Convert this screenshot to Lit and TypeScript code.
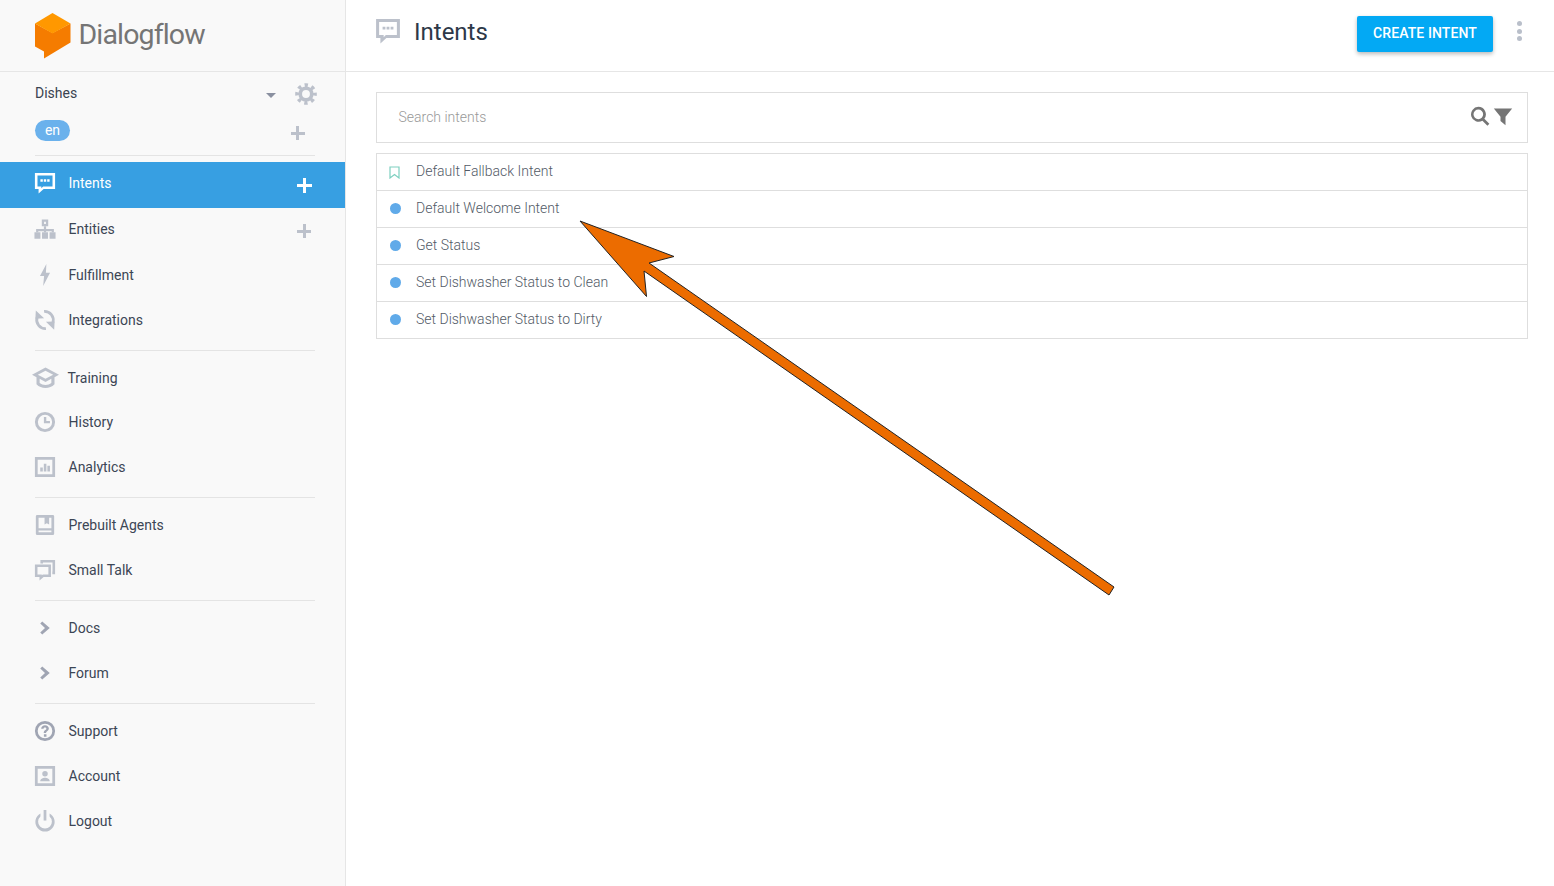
import { LitElement, html, css, svg } from "lit";
import { customElement } from "lit/decorators.js";

const icons: Record<string, unknown> = {
  intents: svg`<path fill-rule="evenodd" d="M1 1h22v17.500H10.500L5 23.500v-5H1zM3.800 3.800v11.900H8v2l2-2h10.200V3.800z"/><path d="M7 8h2.600v2.600H7zM10.700 8h2.600v2.600h-2.600zM14.400 8H17v2.600h-2.600z"/>`,
  entities: svg`<path fill-rule="evenodd" d="M8.500 .5h7v7.500h-7zM11 3v2.500h2V3z"/><path d="M10.800 8h2.400v3h8.500v3.500h-2.400v-1.200H13.200v1.200h-2.400v-1.200H4.700v1.200H2.300V11h8.500z"/><path d="M.5 14.500h6.500V21.500H.5zM8.750 14.500h6.500V21.500h-6.500zM17 14.500h6.500V21.500H17z"/>`,
  bolt: svg`<path d="M13.500 0 6.500 13h4.500L10 24l7.500-14.500H13z"/>`,
  sync: svg`<path fill="none" stroke="#bcc1cb" stroke-width="3" d="M13 21.500A9.500 9.500 0 0 1 3.300 9.500"/><path fill="none" stroke="#bcc1cb" stroke-width="3" d="M11 2.500A9.500 9.500 0 0 1 20.700 14.500"/><path d="M2 1.500 11 10 1.500 10.500zM22 22.500 13 14 22.500 13.500z"/>`,
  training: svg`<path fill-rule="evenodd" d="M12 3 0 9.500 4 11.700V18c2 2.300 5 3.300 8 3.300s6-1 8-3.300v-6.300L24 9.500zM12 6 18.800 9.500 12 13 5.200 9.500zM6.800 13.200 12 16l5.200-2.800v3.700c-1.400 1.100-3.200 1.700-5.200 1.700s-3.800-.6-5.200-1.700z"/>`,
  history: svg`<path fill-rule="evenodd" d="M12 1a11 11 0 1 0 0 22 11 11 0 0 0 0-22zm0 3.200a7.800 7.800 0 1 1 0 15.600 7.800 7.800 0 0 1 0-15.600z"/><path d="M10.800 6.500h2.600v4.300h4v2.600h-6.600z"/>`,
  analytics: svg`<path fill-rule="evenodd" d="M1 1h22v22H1zM4 4v16h16V4z"/><path d="M6.800 12.500h2.800V17H6.800zM10.700 8.500h2.800V17h-2.800zM14.600 10.500h2.800V17h-2.800z"/>`,
  prebuilt: svg`<path fill-rule="evenodd" d="M3.500 1h17a1.500 1.500 0 0 1 1.500 1.500v19a1.500 1.500 0 0 1-1.500 1.500h-17A1.500 1.500 0 0 1 2 21.500v-19A1.500 1.500 0 0 1 3.500 1zm1.500 3v11.500h14V4h-2.500v7.500L14 10l-2.500 1.500V4zM5 18v2h14v-2z"/>`,
  talk: svg`<path fill-rule="evenodd" d="M7 1h16v15.500h-3v-2.800h.2V3.800H9.800V5H7z"/><path fill-rule="evenodd" d="M1 6h17.500v13.500h-8L6 23.500v-4H1zm2.800 2.800v8H8.500v1l1.200-1H15.700v-8z"/>`,
  chevron: svg`<path d="M9 4.800 17.200 12 9 19.200 6.800 17 12 12 6.800 7z"/>`,
  support: svg`<path fill-rule="evenodd" d="M12 1a11 11 0 1 0 0 22 11 11 0 0 0 0-22zm0 3a8 8 0 1 1 0 16 8 8 0 0 1 0-16z"/><path d="M10.800 15.600h2.800v2.600h-2.800zM12 5.800c-2.300 0-4 1.500-4.200 3.700h2.600c.1-.9.700-1.400 1.600-1.400s1.500.6 1.500 1.400c0 .7-.4 1-1.100 1.500-1.200.9-1.800 1.600-1.800 3.300h2.600c0-1 .3-1.300 1.100-1.900 1.100-.8 1.900-1.600 1.900-3 0-2.100-1.800-3.600-4.200-3.600z"/>`,
  account: svg`<path fill-rule="evenodd" d="M1 1h22v22H1zM4 4v16h16V4z"/><path d="M12 6.500a3 3 0 1 1 0 6 3 3 0 0 1 0-6zM6.800 17.800c0-2.500 2.900-3.800 5.200-3.800s5.200 1.300 5.200 3.800z"/>`,
  logout: svg`<path d="M10.500 0h3v11.500h-3z"/><path d="M7 3.800v3.400a7.500 7.500 0 1 0 10 0V3.800a10.500 10.500 0 1 1-10 0z"/>`,
  gear: svg`<circle cx="12" cy="12" r="6.300" fill="none" stroke="#bcc1cb" stroke-width="4"/><circle cx="12" cy="12" r="9.600" fill="none" stroke="#bcc1cb" stroke-width="4.400" stroke-dasharray="3.600 3.940" stroke-dashoffset="1.800"/>`,
};

const icon = (name: string, cls = "") =>
  html`<svg class="ic ${cls}" viewBox="0 0 24 24" aria-hidden="true">${icons[name]}</svg>`;

const plus = (cls = "") => html`<span class="plus ${cls}"></span>`;

type Item = { label: string; icon: string; cls?: string; add?: boolean };

const groups: Item[][] = [
  [
    { label: "Entities", icon: "entities", add: true },
    { label: "Fulfillment", icon: "bolt" },
    { label: "Integrations", icon: "sync" },
  ],
  [
    { label: "Training", icon: "training", cls: "wide" },
    { label: "History", icon: "history" },
    { label: "Analytics", icon: "analytics" },
  ],
  [
    { label: "Prebuilt Agents", icon: "prebuilt" },
    { label: "Small Talk", icon: "talk" },
  ],
  [
    { label: "Docs", icon: "chevron", cls: "dark" },
    { label: "Forum", icon: "chevron", cls: "dark" },
  ],
  [
    { label: "Support", icon: "support", cls: "dark" },
    { label: "Account", icon: "account" },
    { label: "Logout", icon: "logout" },
  ],
];

const rows = [
  "Default Fallback Intent",
  "Default Welcome Intent",
  "Get Status",
  "Set Dishwasher Status to Clean",
  "Set Dishwasher Status to Dirty",
];

@customElement("app-root")
export class AppRoot extends LitElement {
  static styles = css`
    :host {
      display: block;
      position: relative;
      width: 100%;
      height: 886px;
      overflow: hidden;
      background: #fff;
      font-family: Roboto, "Liberation Sans", sans-serif;
      font-size: 14px;
      color: #3a4350;
    }
    .layout { display: flex; height: 100%; }
    .side {
      width: 345px;
      flex: none;
      background: #f9f9f9;
      border-right: 1px solid #e6e6e6;
      display: flex;
      flex-direction: column;
    }
    .logo {
      height: 71px;
      flex: none;
      border-bottom: 1px solid #e6e6e6;
      display: flex;
      align-items: center;
      padding-left: 34px;
      gap: 7.5px;
    }
    .logo svg { width: 37px; height: 46px; flex: none; margin-top: 1px; }
    .logo span {
      font-size: 28.5px;
      color: #757575;
      letter-spacing: -0.85px;
      margin-top: -3px;
    }
    .agent {
      display: grid;
      grid-template-columns: 1fr auto auto;
      grid-template-rows: 21px 21px;
      row-gap: 16px;
      padding: 11px 28px 14px 35px;
      align-items: center;
    }
    .agent-name { grid-row: 1; grid-column: 1; margin-top: -2px; }
    .caret {
      grid-row: 1;
      grid-column: 2;
      width: 0;
      height: 0;
      border: 5px solid transparent;
      border-top: 5px solid #8a90a0;
      border-bottom: 0;
      margin: 4px 19px 0 0;
    }
    .ic { width: 22px; height: 22px; fill: #bcc1cb; flex: none; display: block; }
    .gear { grid-row: 1; grid-column: 3; margin-top: 1px; }
    .pill {
      grid-row: 2;
      grid-column: 1;
      justify-self: start;
      width: 35px;
      height: 21px;
      border-radius: 11px;
      background: #6ab1ec;
      color: #fff;
      text-align: center;
      line-height: 20px;
      font-size: 14px;
    }
    .agent-add { grid-row: 2; grid-column: 2 / 4; justify-self: end; margin: 5px 12.5px 0 0; }
    .plus { display: block; position: relative; width: 14px; height: 14px; flex: none; }
    .plus::before, .plus::after { content: ""; position: absolute; background: #bcc1cb; }
    .plus::before { left: 0; right: 0; top: 5.5px; height: 3px; }
    .plus::after { top: 0; bottom: 0; left: 5.5px; width: 3px; }
    .plus.white { width: 15px; height: 15px; }
    .plus.white::before, .plus.white::after { background: #fff; }
    .plus.white::before { top: 6px; height: 3px; }
    .plus.white::after { left: 6px; width: 3px; }
    .rule { height: 1px; background: #e4e4e4; margin: 0 30px 0 35px; flex: none; }
    .rule.first { margin-bottom: 6px; }
    .item {
      height: 45px;
      display: flex;
      align-items: center;
      padding: 0 32px 0 34px;
      gap: 12.5px;
      color: #3c4655;
      flex: none;
    }
    .item .label { flex: 1; margin-top: -4px; }
    .item > .ic { margin-top: -4px; }
    .item .plus { margin: -1px 2px 0 0; }
    .item.active { height: 46px; background: #379fe2; color: #fff; }
    .item.active .ic { fill: #fff; }
    .item .plus.white { margin: 0 1.5px 0 0; }
    .item > .ic.wide { width: 27px; height: 27px; margin: -6.5px -4px -2.5px -2px; }
    .item > .ic.wide + .label { margin-top: -2px; }
    .ic.dark { fill: #a0a5b3; }
    .group { padding: 6.5px 0 5.5px; }
    .group.g0 { padding: 1px 0 6px; }
    .group.g0 .item:first-child .label { margin-top: -6px; }
    .group.g1 { padding: 5.5px 0 5.5px; }
    .main { flex: 1; min-width: 0; display: flex; flex-direction: column; }
    .top {
      height: 71px;
      border-bottom: 1px solid #e6e6e6;
      flex: none;
      display: flex;
      align-items: center;
      padding: 0 32.5px 0 29px;
    }
    .top .ic { width: 26px; height: 26px; margin-top: -9px; }
    .top h1 {
      flex: 1;
      margin: -7px 0 0 13px;
      font-weight: 400;
      font-size: 24px;
      color: #2d3848;
    }
    .cta {
      width: 136px;
      height: 36px;
      border: 0;
      border-radius: 2px;
      background: #03a9f4;
      color: #fff;
      font: 500 14px Roboto, "Liberation Sans", sans-serif;
      letter-spacing: 0.1px;
      box-shadow: 0 2px 4px rgba(0,0,0,.28);
      margin-top: -3px;
      padding: 0 0 2px;
    }
    .kebab { display: flex; flex-direction: column; gap: 2.5px; margin-left: 23.5px; margin-top: -9px; }
    .kebab i { display: block; width: 5px; height: 5px; border-radius: 50%; background: #b9bfca; }
    .content { padding: 20px 26px 0 30px; display: flex; flex-direction: column; gap: 10px; }
    .search {
      height: 49px;
      border: 1px solid #dedede;
      display: flex;
      align-items: center;
      padding: 0 14px 0 21.5px;
      gap: 3px;
      color: #999;
    }
    .search .ph { flex: 1; margin-top: -1px; font-weight: 300; }
    .search svg { width: 20px; height: 20px; fill: #757575; flex: none; margin-top: -3px; }
    .list { border: 1px solid #dedede; display: flex; flex-direction: column; }
    .row {
      height: 36px;
      display: flex;
      align-items: center;
      padding-left: 13px;
      gap: 15px;
      color: #525a66;
      font-weight: 300;
    }
    .row + .row { border-top: 1px solid #dedede; }
    .dot { width: 11px; height: 11px; border-radius: 50%; background: #60aae9; flex: none; margin-top: -1px; }
    .mark { width: 11px; height: 13px; flex: none; fill: none; stroke: #7ed0c0; stroke-width: 1.2; margin: 1px 0 0 -1px; }
    .mark + span { margin-left: 1px; }
    .row span { margin-top: -3px; }
    .arrow { position: absolute; inset: 0; width: 100%; height: 100%; pointer-events: none; }
  `;

  renderItem(i: Item) {
    return html`<div class="item">
      ${icon(i.icon, i.cls)}
      <span class="label">${i.label}</span>
      ${i.add ? plus() : ""}
    </div>`;
  }

  render() {
    return html`
      <div class="layout">
        <aside class="side">
          <div class="logo">
            <svg viewBox="0 0 37 46">
              <path fill="#f57c00" d="M1 10.500 18.500 20 36.500 10.500V29.500L10 45.500V38.500L1 33.500z"/>
              <path fill="#ff9800" d="M18.500 0 36.500 10.500 18.500 20.500 1 10.500z"/>
            </svg>
            <span>Dialogflow</span>
          </div>
          <div class="agent">
            <span class="agent-name">Dishes</span>
            <span class="caret"></span>
            ${icon("gear", "gear")}
            <span class="pill">en</span>
            <span class="plus agent-add"></span>
          </div>
          <div class="rule first"></div>
          <div class="item active">
            ${icon("intents")}
            <span class="label">Intents</span>
            ${plus("white")}
          </div>
          ${groups.map(
            (g, n) => html`
              ${n > 0 ? html`<div class="rule"></div>` : ""}
              <div class="group g${n}">${g.map((i) => this.renderItem(i))}</div>
            `
          )}
        </aside>
        <main class="main">
          <header class="top">
            ${icon("intents")}
            <h1>Intents</h1>
            <button class="cta">CREATE INTENT</button>
            <div class="kebab"><i></i><i></i><i></i></div>
          </header>
          <section class="content">
            <div class="search">
              <span class="ph">Search intents</span>
              <svg viewBox="0 0 24 24"><path fill-rule="evenodd" d="M10 1a9 9 0 0 1 7.200 14.400l6 6-2.300 2.300-6-6A9 9 0 1 1 10 1zm0 3.200a5.800 5.800 0 1 0 0 11.600 5.800 5.800 0 0 0 0-11.600z"/></svg>
              <svg viewBox="0 0 24 24"><path d="M1 3h22l-8 10v10l-6-5v-5z"/></svg>
            </div>
            <div class="list">
              ${rows.map(
                (r, n) => html`<div class="row">
                  ${n === 0
                    ? html`<svg class="mark" viewBox="0 0 11 13"><path d="M1 1h9v11L5.500 8.500 1 12z"/></svg>`
                    : html`<i class="dot"></i>`}
                  <span>${r}</span>
                </div>`
              )}
            </div>
          </section>
        </main>
      </div>
      <svg class="arrow" viewBox="0 0 1554 886" aria-hidden="true">
        <path d="M580 221 674 256.500 649 263 1114 587 1109 595 644 271 646.500 296.500z" fill="#ec6c00" stroke="#222" stroke-width="1"/>
      </svg>
    `;
  }
}
